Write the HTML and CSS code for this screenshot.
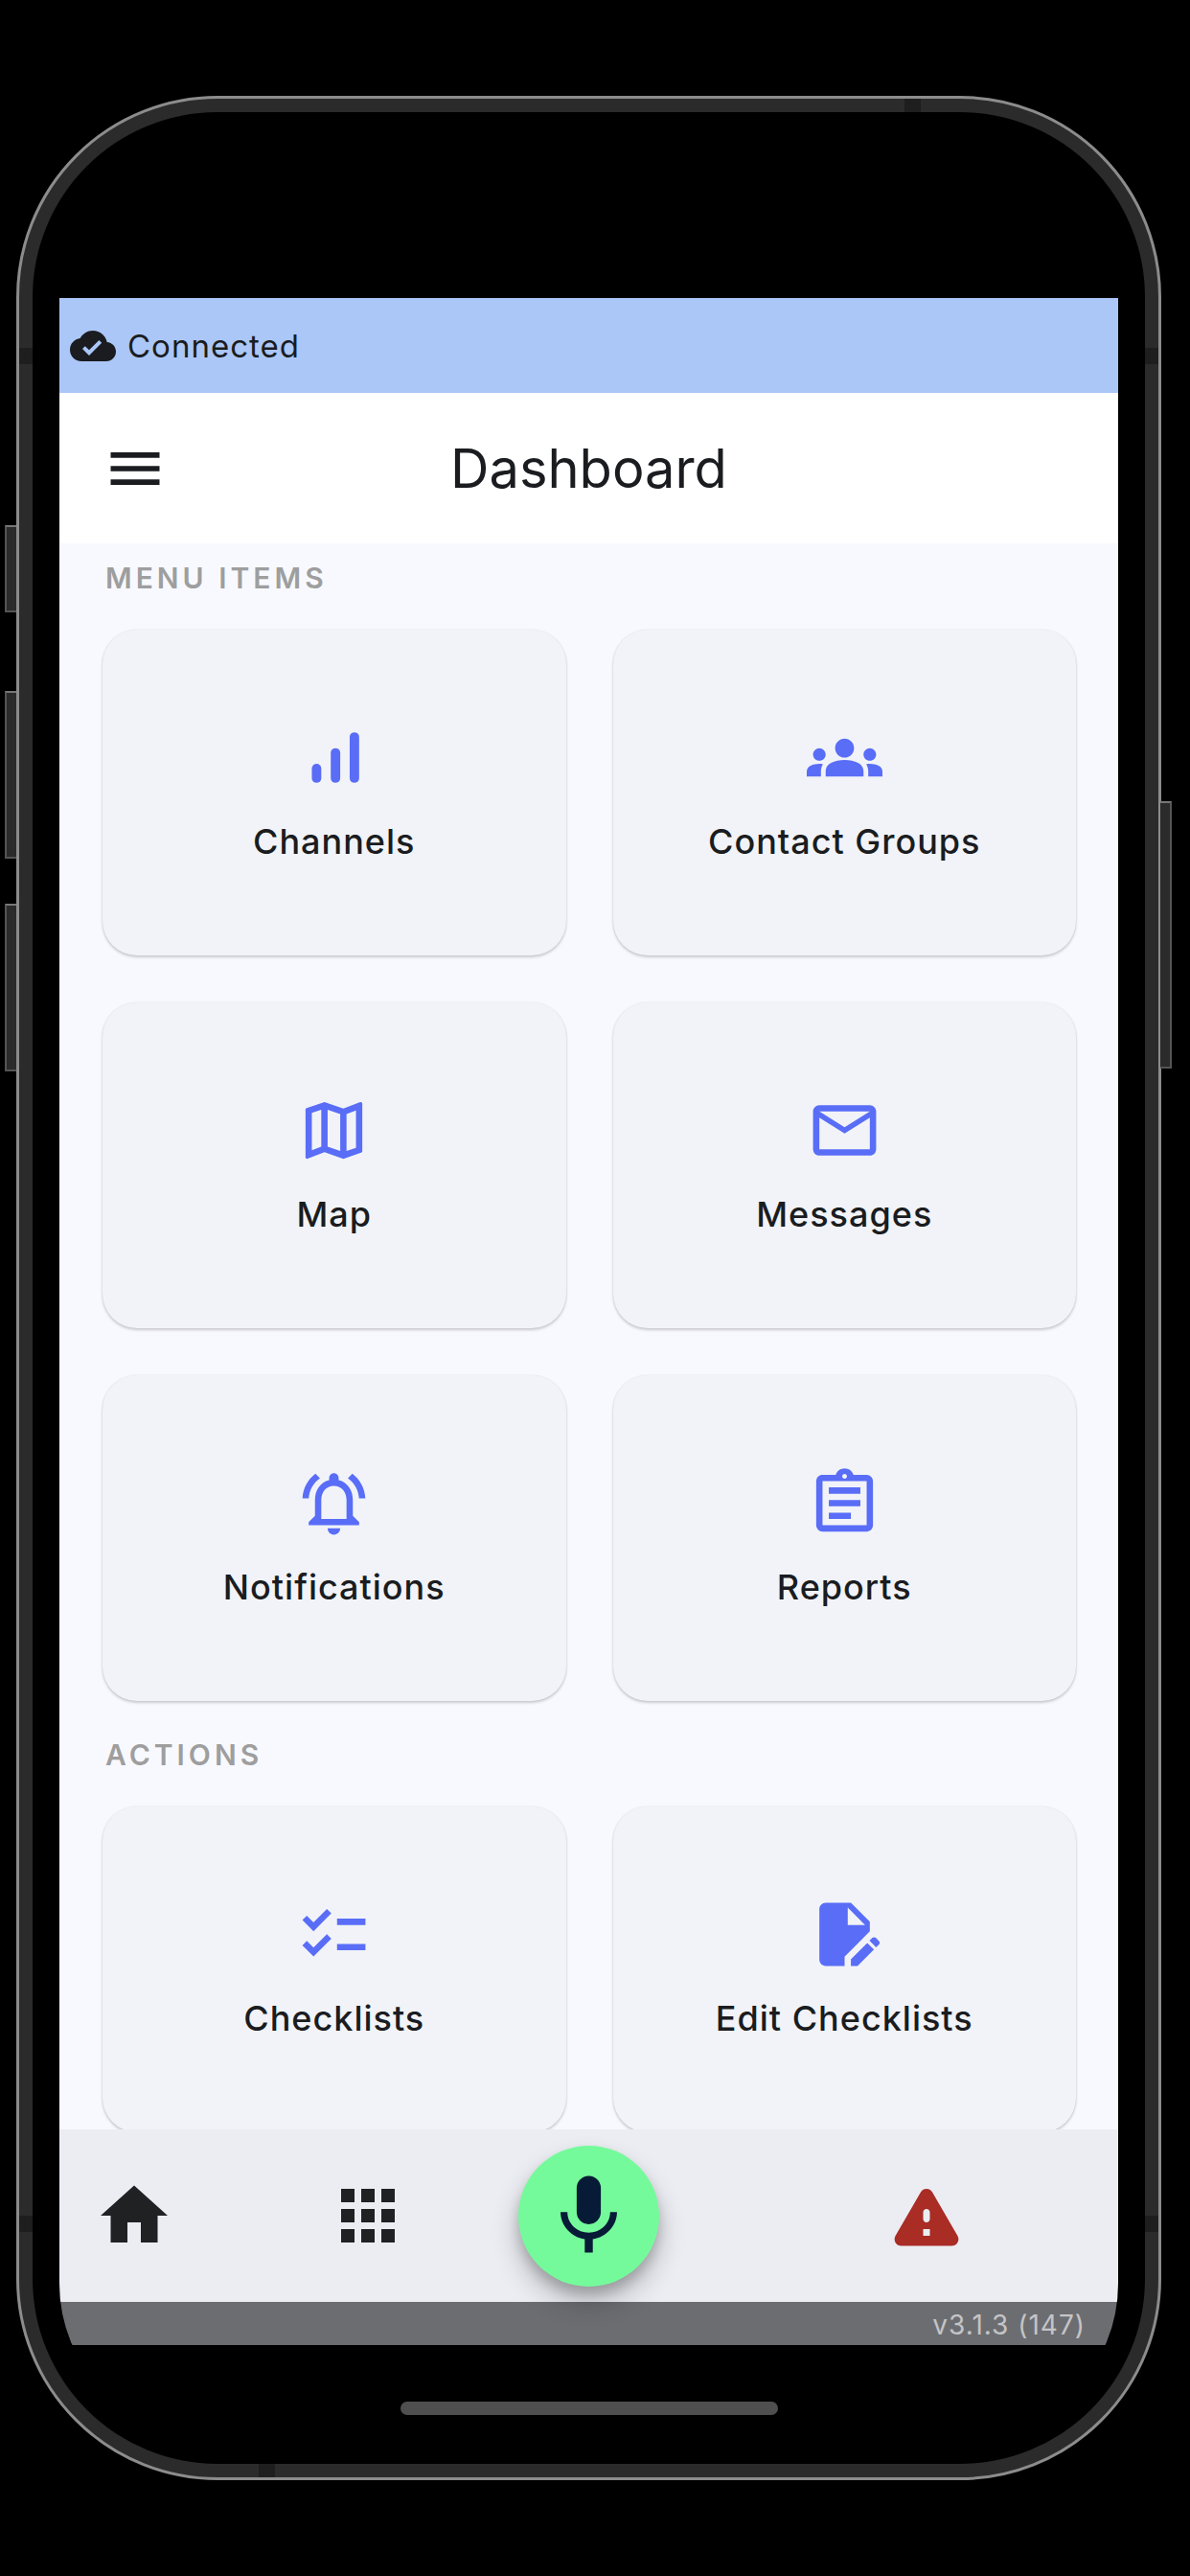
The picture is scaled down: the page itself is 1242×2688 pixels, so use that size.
FILE: index.html
```html
<!DOCTYPE html>
<html lang="en">
<head>
    <meta charset="utf-8">
    <meta name="viewport" content="width=device-width, initial-scale=1">
    <title>Dashboard</title>
    <link rel="stylesheet" href="styles.css">
</head>
<body>
    <div class="phone">
        <!-- side keys and antenna lines -->
        <span class="key key-silent"></span>
        <span class="key key-up"></span>
        <span class="key key-down"></span>
        <span class="key key-power"></span>
        <span class="band band-side band-left-top"></span>
        <span class="band band-side band-left-bottom"></span>
        <span class="band band-side band-right-top"></span>
        <span class="band band-side band-right-bottom"></span>
        <span class="band band-edge band-top"></span>
        <span class="band band-edge band-bottom"></span>
        <div class="bezel">
            <div class="screen">
                <div class="connection">
                    <svg viewBox="0 0 24 24"><path d="M19.35 10.04C18.67 6.59 15.64 4 12 4 9.11 4 6.6 5.64 5.35 8.04 2.34 8.36 0 10.91 0 14c0 3.31 2.69 6 6 6h13c2.76 0 5-2.24 5-5 0-2.64-2.05-4.78-4.65-4.96zM10 17l-3.5-3.5 1.41-1.41L10 14.17 15.18 9l1.41 1.41L10 17z"/></svg>
                    <span>Connected</span>
                </div>
                <header>
                    <button type="button" class="menu-button" aria-label="Open menu">
                        <svg viewBox="0 0 24 24"><path d="M3 18h18v-2H3v2zm0-5h18v-2H3v2zm0-7v2h18V6H3z"/></svg>
                    </button>
                    <h1>Dashboard</h1>
                </header>
                <main>
                    <section>
                        <h2>MENU ITEMS</h2>
                        <div class="cards">
                            <a class="card" href="#">
                                <svg viewBox="0 0 24 24"><rect x="5" y="14" width="3" height="6" rx="1.5"/><rect x="11" y="9" width="3" height="11" rx="1.5"/><rect x="17" y="4" width="3" height="16" rx="1.5"/></svg>
                                <span>Channels</span>
                            </a>
                            <a class="card" href="#">
                                <svg viewBox="0 0 24 24"><path d="M12 12.75c1.63 0 3.07.39 4.24.9 1.08.48 1.76 1.56 1.76 2.73V18H6v-1.61c0-1.18.68-2.26 1.76-2.73 1.17-.52 2.61-.91 4.24-.91zM4 13c1.1 0 2-.9 2-2s-.9-2-2-2-2 .9-2 2 .9 2 2 2zm1.13 1.1c-.37-.06-.74-.1-1.13-.1-.99 0-1.93.21-2.78.58C.48 14.9 0 15.62 0 16.43V18h4.5v-1.61c0-.83.23-1.61.63-2.29zM20 13c1.1 0 2-.9 2-2s-.9-2-2-2-2 .9-2 2 .9 2 2 2zm4 3.43c0-.81-.48-1.53-1.22-1.85-.85-.37-1.79-.58-2.78-.58-.39 0-.76.04-1.13.1.4.68.63 1.46.63 2.29V18H24v-1.57zM12 6c1.66 0 3 1.34 3 3s-1.34 3-3 3-3-1.34-3-3 1.34-3 3-3z"/></svg>
                                <span>Contact Groups</span>
                            </a>
                            <a class="card" href="#">
                                <svg viewBox="0 0 24 24"><path d="M20.5 3l-.16.03L15 5.1 9 3 3.36 4.9c-.21.07-.36.25-.36.48V20.5c0 .28.22.5.5.5l.16-.03L9 18.9l6 2.1 5.64-1.9c.21-.07.36-.25.36-.48V3.5c0-.28-.22-.5-.5-.5zM10 5.47l4 1.4v11.66l-4-1.4V5.47zm-5 .99l3-1.01v11.7l-3 1.16V6.46zm14 11.08l-3 1.01V6.86l3-1.16v11.84z"/></svg>
                                <span>Map</span>
                            </a>
                            <a class="card" href="#">
                                <svg viewBox="0 0 24 24"><path d="M22 6c0-1.1-.9-2-2-2H4c-1.1 0-2 .9-2 2v12c0 1.1.9 2 2 2h16c1.1 0 2-.9 2-2V6zm-2 0l-8 5-8-5h16zm0 12H4V8l8 5 8-5v10z"/></svg>
                                <span>Messages</span>
                            </a>
                            <a class="card" href="#">
                                <svg viewBox="0 0 24 24"><path d="M12 22c1.1 0 2-.9 2-2h-4c0 1.1.89 2 2 2zm6-6v-5c0-3.07-1.63-5.64-4.5-6.32V4c0-.83-.67-1.5-1.5-1.5s-1.5.67-1.5 1.5v.68C7.64 5.36 6 7.92 6 11v5l-2 2v1h16v-1l-2-2zm-2 1H8v-6c0-2.48 1.51-4.5 4-4.5s4 2.02 4 4.5v6zM7.58 4.08L6.15 2.65C3.75 4.48 2.17 7.3 2.03 10.5h2c.15-2.65 1.51-4.97 3.55-6.42zm12.39 6.42h2c-.15-3.2-1.73-6.02-4.12-7.85l-1.42 1.43c2.02 1.45 3.39 3.77 3.54 6.42z"/></svg>
                                <span>Notifications</span>
                            </a>
                            <a class="card" href="#">
                                <svg viewBox="0 0 24 24"><path d="M7 15h7v2H7zm0-4h10v2H7zm0-4h10v2H7zm12-4h-4.18C14.4 1.84 13.3 1 12 1c-1.3 0-2.4.84-2.82 2H5c-.14 0-.27.01-.4.04-.39.08-.74.28-1.01.55-.18.18-.33.4-.43.64-.1.23-.16.49-.16.77v14c0 .27.06.54.16.78s.25.45.43.64c.27.27.62.47 1.01.55.13.02.26.03.4.03h14c1.1 0 2-.9 2-2V5c0-1.1-.9-2-2-2zm-7-.25c.41 0 .75.34.75.75s-.34.75-.75.75-.75-.34-.75-.75.34-.75.75-.75zM19 19H5V5h14v14z"/></svg>
                                <span>Reports</span>
                            </a>
                        </div>
                    </section>
                    <section>
                        <h2>ACTIONS</h2>
                        <div class="cards">
                            <a class="card" href="#">
                                <svg viewBox="0 0 24 24"><path d="M22 7h-9v2h9V7zm0 8h-9v2h9v-2zM5.54 11L2 7.46l1.41-1.41 2.12 2.12 4.24-4.24 1.41 1.41L5.54 11zm0 8L2 15.46l1.41-1.41 2.12 2.12 4.24-4.24 1.41 1.41L5.54 19z"/></svg>
                                <span>Checklists</span>
                            </a>
                            <a class="card" href="#">
                                <svg viewBox="0 0 24 24"><path fill-rule="evenodd" d="M6 2c-1.1 0-2 .9-2 2v16c0 1.1.9 2 2 2h6v-2.9l8-8.1V8l-6-6H6zm7 7V3.5L18.5 9H13z"/><path d="M14 22v-2.1l5.2-5.2 2.1 2.1L16.1 22H14zM19.9 14l.9-.9c.3-.3.8-.3 1.1 0l1 1c.3.3.3.8 0 1.1l-.9.9L19.9 14z"/></svg>
                                <span>Edit Checklists</span>
                            </a>
                        </div>
                    </section>
                </main>
                <nav>
                    <div class="nav-left">
                        <a href="#" aria-label="Home"><svg viewBox="0 0 24 24"><path d="M10 20v-6h4v6h5v-8h3L12 3 2 12h3v8z"/></svg></a>
                        <a href="#" aria-label="Apps"><svg viewBox="0 0 24 24"><path d="M4 8h4V4H4v4zm6 12h4v-4h-4v4zm-6 0h4v-4H4v4zm0-6h4v-4H4v4zm6 0h4v-4h-4v4zm6-10v4h4V4h-4zm-6 4h4V4h-4v4zm6 6h4v-4h-4v4zm0 6h4v-4h-4v4z"/></svg></a>
                    </div>
                    <button type="button" class="talk" aria-label="Talk">
                        <svg viewBox="0 0 24 24"><path d="M12 14c1.66 0 2.99-1.34 2.99-3L15 5c0-1.66-1.34-3-3-3S9 3.34 9 5v6c0 1.66 1.34 3 3 3zm5.3-3c0 3-2.54 5.1-5.3 5.1S6.7 14 6.7 11H5c0 3.41 2.72 6.23 6 6.72V21h2v-3.28c3.28-.48 6-3.3 6-6.72h-1.7z"/></svg>
                    </button>
                    <div class="nav-right">
                        <a class="alert" href="#" aria-label="Alert"><svg viewBox="0 0 24 24"><path d="M4.47 21h15.06c1.54 0 2.5-1.67 1.73-3L13.73 4.99c-.77-1.33-2.69-1.33-3.46 0L2.74 18c-.77 1.33.19 3 1.73 3zM12 14c-.55 0-1-.45-1-1v-2c0-.55.45-1 1-1s1 .45 1 1v2c0 .55-.45 1-1 1zm1 4h-2v-2h2v2z"/></svg></a>
                    </div>
                </nav>
                <footer>v3.1.3 (147)</footer>
                <div class="home-area">
                    <div class="home-indicator"></div>
                </div>
            </div>
        </div>
    </div>
</body>
</html>
```
FILE: styles.css
```css
* {
    box-sizing: border-box;
}
body {
    margin: 0;
    padding: 100px 30px 100px 17px;
    background-color: #000;
    color: #1a1c20;
    font-family: Inter, "Liberation Sans", sans-serif;
}
h1, h2 {
    margin: 0;
}
a {
    color: inherit;
    text-decoration: none;
}
button {
    padding: 0;
    border: none;
    background: none;
    color: inherit;
    cursor: pointer;
}
svg {
    display: block;
    fill: currentColor;
}

/* device */
.phone {
    position: relative;
    height: calc(100vh - 200px);
    padding: 14px;
    border: 3px solid #8c8c8c;
    border-radius: 210px;
    background-color: #2b2b2b;
}
.bezel {
    height: 100%;
    padding: 28px;
    border-radius: 193px;
    background-color: #000;
}
.screen {
    display: flex;
    flex-direction: column;
    height: 100%;
    padding-top: 166px;
    border-radius: 160px;
    overflow: hidden;
}
.key {
    position: absolute;
    left: -15px;
    width: 12px;
    border: 2px solid #555;
    border-top-color: #777;
    border-right: none;
    background-color: #2b2b2b;
}
.key-silent {
    top: 445px;
    height: 91px;
}
.key-up {
    top: 618px;
    height: 175px;
}
.key-down {
    top: 840px;
    height: 175px;
}
.key-power {
    top: 733px;
    left: auto;
    right: -14px;
    height: 279px;
    border-right: 2px solid #555;
    border-left: none;
}
.band {
    position: absolute;
    background-color: #1e1e1e;
}
.band-side {
    width: 14px;
    height: 17px;
}
.band-edge {
    width: 17px;
    height: 14px;
}
.band-left-top, .band-left-bottom {
    left: 0;
}
.band-right-top, .band-right-bottom {
    right: 0;
}
.band-left-top, .band-right-top {
    top: 260px;
}
.band-left-bottom, .band-right-bottom {
    bottom: 256px;
}
.band-top {
    top: 0;
    right: 248px;
}
.band-bottom {
    bottom: 0;
    left: 250px;
}

/* top bars */
.connection {
    display: flex;
    align-items: center;
    gap: 12px;
    height: 99px;
    padding: 0 11px;
    background-color: #abc7f7;
    font-size: 33px;
    letter-spacing: 1px;
}
.connection svg {
    width: 48px;
    height: 48px;
}
header {
    display: grid;
    grid-template-columns: 1fr auto 1fr;
    align-items: center;
    height: 157px;
    padding: 0 45px;
    background-color: #fff;
}
.menu-button {
    justify-self: start;
}
.menu-button svg {
    width: 68px;
    height: 68px;
}
h1 {
    font-size: 56px;
    font-weight: 400;
}

/* card lists */
main {
    flex: 1;
    min-height: 0;
    padding: 18px 44px 0 45px;
    background-color: #f8f9ff;
    overflow: hidden;
}
section {
    margin-bottom: 38px;
}
h2 {
    margin: 0 3px 36px;
    color: #9e9e9e;
    font-size: 30px;
    font-weight: 600;
    line-height: 36px;
    letter-spacing: 4px;
}
.cards {
    display: grid;
    grid-template-columns: 1fr 1fr;
    gap: 49px;
}
.card {
    display: flex;
    flex-direction: column;
    align-items: center;
    justify-content: center;
    gap: 26px;
    height: 340px;
    padding-bottom: 4px;
    border-radius: 36px;
    background-color: #f1f3f8;
    box-shadow: 0 2px 3px rgba(0, 0, 0, 0.18), 0 0 2px rgba(0, 0, 0, 0.1);
    font-size: 36px;
    font-weight: 500;
    line-height: 44px;
    letter-spacing: 1px;
}
.card svg {
    width: 79px;
    height: 79px;
    color: #596df7;
}

/* bottom bar */
nav {
    position: relative;
    display: grid;
    grid-template-columns: 1fr auto 1fr;
    align-items: center;
    height: 180px;
    background-color: #ebedf2;
}
nav a svg {
    width: 84px;
    height: 84px;
}
.nav-left {
    display: flex;
    gap: 160px;
    padding-left: 36px;
    color: #1f2123;
}
.nav-right {
    display: flex;
    justify-content: flex-end;
    padding-right: 158px;
}
.alert {
    color: #a92c25;
}
.talk {
    display: flex;
    align-items: center;
    justify-content: center;
    width: 147px;
    height: 147px;
    border-radius: 50%;
    background-color: #75fa9b;
    box-shadow: 0 16px 28px rgba(0, 0, 0, 0.24), 0 8px 12px rgba(0, 0, 0, 0.16);
    color: #071b36;
}
.talk svg {
    width: 101px;
    height: 101px;
}
footer {
    height: 45px;
    padding-right: 34px;
    background-color: #6c6d71;
    color: #c4c4c6;
    font-size: 28px;
    line-height: 48px;
    letter-spacing: 1px;
    text-align: right;
}
.home-area {
    display: flex;
    justify-content: center;
    height: 96px;
    padding-top: 59px;
}
.home-indicator {
    width: 394px;
    height: 14px;
    border-radius: 7px;
    background-color: #4f4f4f;
}
```
